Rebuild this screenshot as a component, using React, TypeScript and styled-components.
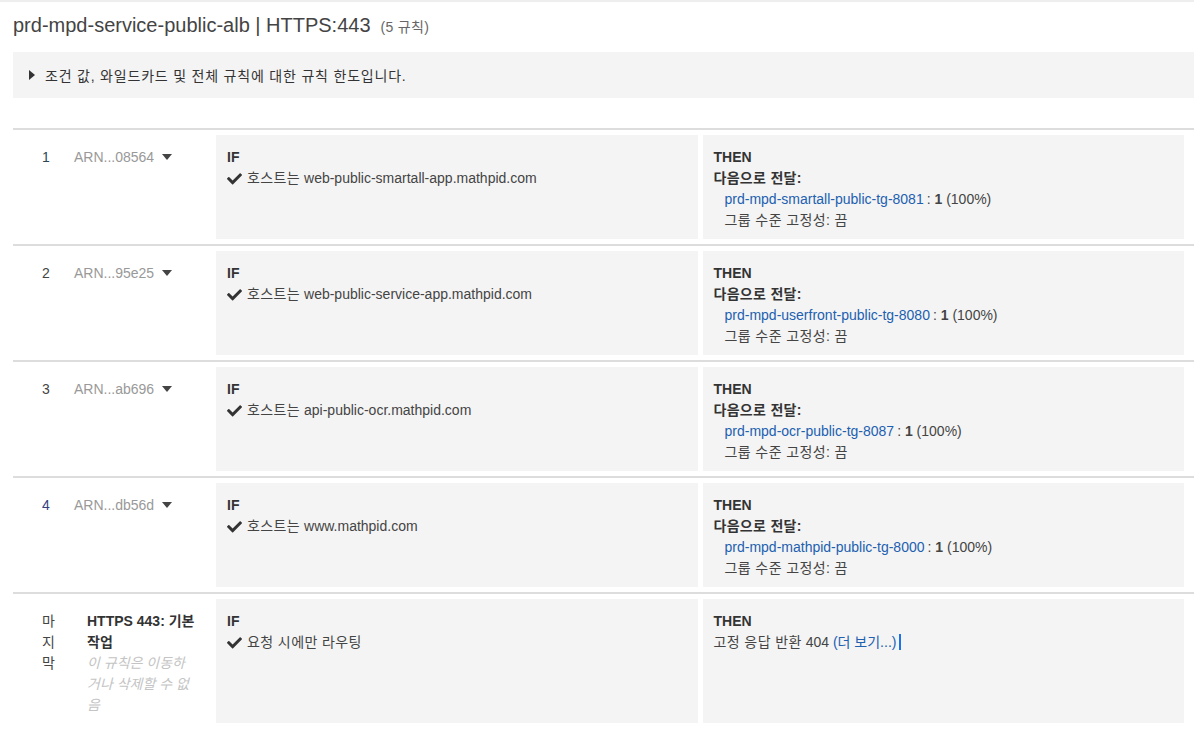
import React from "react";
import styled, { createGlobalStyle } from "styled-components";

const Global = createGlobalStyle`
  html, body { margin: 0; padding: 0; background: #fff; }
  body {
    font-family: "Liberation Sans", Arial, "Noto Sans CJK KR", sans-serif;
    color: #444;
    font-size: 14px;
  }
`;

const Page = styled.div`
  border-top: 2px solid #eee;
  padding: 0 0 0 13px;
  width: 1181px;
  overflow: hidden;
`;

const Title = styled.h2`
  margin: 10px 0 0 0;
  font-size: 20px;
  font-weight: normal;
  line-height: 26px;
  color: #444;
`;

const Count = styled.span`
  font-size: 14px;
  color: #666;
  margin-left: 10px;
  letter-spacing: 0.3px;
`;

const InfoBox = styled.div`
  margin-top: 12px;
  height: 46px;
  background: #f4f4f4;
  display: flex;
  align-items: center;
  padding-left: 16px;
  gap: 10px;
  font-size: 14px;
  letter-spacing: 0.8px;
  color: #333;
`;

const Table = styled.div`
  margin-top: 30px;
`;

const Row = styled.div`
  display: grid;
  grid-template-columns: 56px 137px 1fr 1fr;
  column-gap: 5px;
  border-top: 2px solid #ddd;
  padding: 5px 10px 5px 0;
  line-height: 21px;
`;

const NumCell = styled.div<{ $color?: string }>`
  padding: 12px 0 0 29px;
  color: ${(p) => p.$color || "#444"};
  & > span {
    display: block;
    width: 16px;
  }
`;

const ArnCell = styled.div`
  padding-top: 12px;
  color: #999;
  display: flex;
  align-items: flex-start;
  gap: 8px;
  & svg {
    margin-top: 7px;
  }
`;

const LabelCell = styled.div`
  padding: 12px 16px 7px 13px;
`;

const LabelTitle = styled.div`
  font-weight: bold;
  color: #333;
`;

const LabelNote = styled.div`
  font-style: italic;
  color: #c4c4c4;
`;

const Cell = styled.div`
  background: #f4f4f4;
  padding: 12px 11px 8px;
  min-height: 84px;
`;

const Head = styled.div`
  font-weight: bold;
  color: #333;
  font-size: 14px;
`;

const Cond = styled.div`
  display: flex;
  align-items: center;
  gap: 5px;
  color: #444;
`;

const Strong = styled.div`
  font-weight: bold;
  color: #333;
  letter-spacing: 0.3px;
`;

const Indent = styled.div`
  padding-left: 11px;
  color: #444;
`;

const Korean = styled.span`
  letter-spacing: 0.4px;
`;

const Link = styled.a`
  color: #2160b0;
  text-decoration: none;
  margin-right: 3px;
`;

const Cursor = styled.span`
  display: inline-block;
  width: 2px;
  height: 16px;
  background: #1a73e8;
  vertical-align: -3px;
`;

const Check = () => (
  <svg width="15" height="13" viewBox="0 0 512 420" fill="#333">
    <path d="M173.9 405.1L7.5 238.7c-10-10-10-26.2 0-36.2l36.2-36.2c10-10 26.2-10 36.2 0L192 278.2 432.1 38.1c10-10 26.2-10 36.2 0l36.2 36.2c10 10 10 26.2 0 36.2L210.1 405.1c-10 10-26.2 10-36.2 0z" />
  </svg>
);

const Caret = () => (
  <svg width="10" height="6" viewBox="0 0 10 6" fill="#444">
    <path d="M0 0h10L5 6z" />
  </svg>
);

const RightTri = () => (
  <svg width="6" height="10" viewBox="0 0 6 10" fill="#333">
    <path d="M0 0l6 5-6 5z" />
  </svg>
);

const rules = [
  { n: "1", arn: "ARN...08564", host: "web-public-smartall-app.mathpid.com", tg: "prd-mpd-smartall-public-tg-8081", color: "#2e4756" },
  { n: "2", arn: "ARN...95e25", host: "web-public-service-app.mathpid.com", tg: "prd-mpd-userfront-public-tg-8080", color: "#444" },
  { n: "3", arn: "ARN...ab696", host: "api-public-ocr.mathpid.com", tg: "prd-mpd-ocr-public-tg-8087", color: "#444" },
  { n: "4", arn: "ARN...db56d", host: "www.mathpid.com", tg: "prd-mpd-mathpid-public-tg-8000", color: "#37407e" },
];

export default function App() {
  return (
    <>
      <Global />
      <Page>
        <Title>
          prd-mpd-service-public-alb | HTTPS:443<Count>(5 규칙)</Count>
        </Title>
        <InfoBox>
          <RightTri />
          <span>조건 값, 와일드카드 및 전체 규칙에 대한 규칙 한도입니다.</span>
        </InfoBox>
        <Table>
          {rules.map((r) => (
            <Row key={r.n}>
              <NumCell $color={r.color}>
                <span>{r.n}</span>
              </NumCell>
              <ArnCell>
                <span>{r.arn}</span>
                <Caret />
              </ArnCell>
              <Cell>
                <Head>IF</Head>
                <Cond>
                  <Check />
                  <span>
                    <Korean>호스트는</Korean> {r.host}
                  </span>
                </Cond>
              </Cell>
              <Cell>
                <Head>THEN</Head>
                <Strong>다음으로 전달:</Strong>
                <Indent>
                  <Link href="#">{r.tg}</Link>: <b>1</b> (100%)
                </Indent>
                <Indent>
                  <Korean>그룹 수준 고정성: 끔</Korean>
                </Indent>
              </Cell>
            </Row>
          ))}
          <Row>
            <NumCell>
              <span>마지막</span>
            </NumCell>
            <LabelCell>
              <LabelTitle>HTTPS 443: 기본 작업</LabelTitle>
              <LabelNote>이 규칙은 이동하거나 삭제할 수 없음</LabelNote>
            </LabelCell>
            <Cell>
              <Head>IF</Head>
              <Cond>
                <Check />
                <Korean>요청 시에만 라우팅</Korean>
              </Cond>
            </Cell>
            <Cell>
              <Head>THEN</Head>
              <div>
                <Korean>고정 응답 반환</Korean> 404 <Link href="#">(더 보기...)</Link>
                <Cursor />
              </div>
            </Cell>
          </Row>
        </Table>
      </Page>
    </>
  );
}
